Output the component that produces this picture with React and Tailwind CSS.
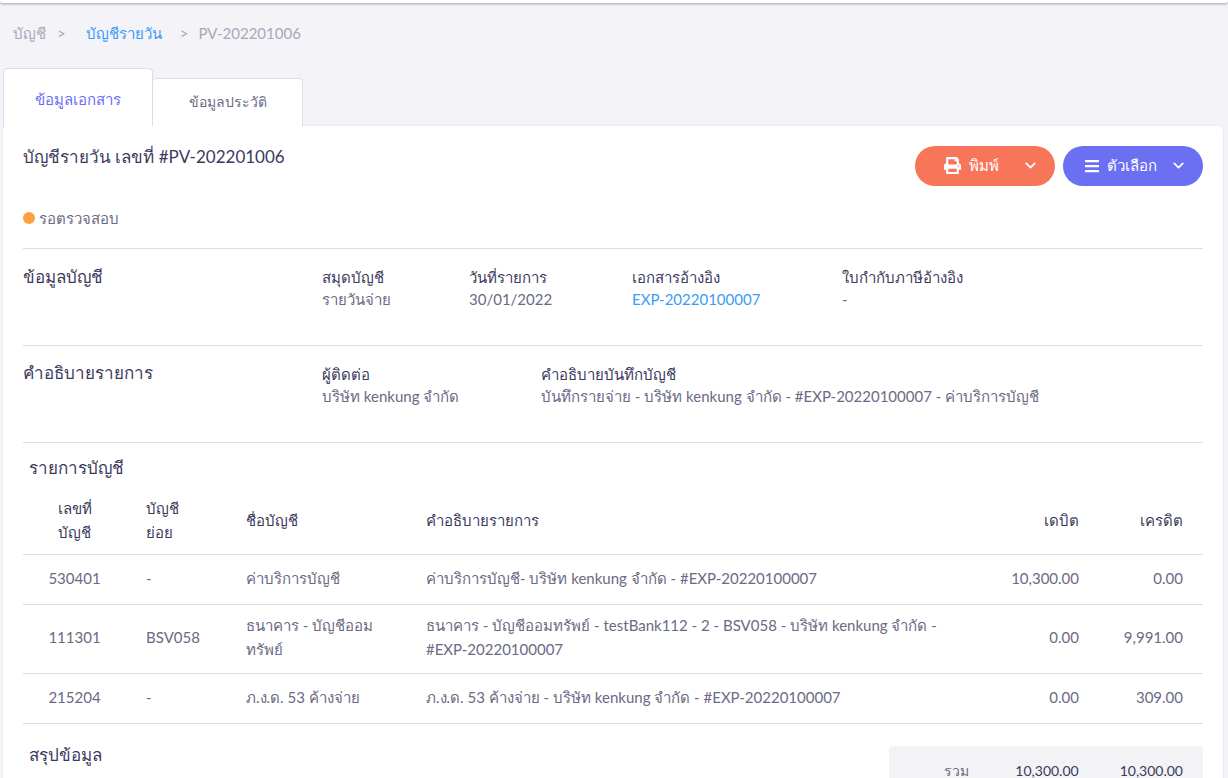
import { ChevronDown } from "lucide-react";
import { FaPrint, FaBars } from "react-icons/fa";

const rows = [
  { no: "530401", sub: "-", name: ["ค่าบริการบัญชี"], desc: ["ค่าบริการบัญชี- บริษัท kenkung จำกัด - #EXP-20220100007"], dr: "10,300.00", cr: "0.00", h: "h-[50px]" },
  { no: "111301", sub: "BSV058", name: ["ธนาคาร - บัญชีออม", "ทรัพย์"], desc: ["ธนาคาร - บัญชีออมทรัพย์ - testBank112 - 2 - BSV058 - บริษัท kenkung จำกัด -", "#EXP-20220100007"], dr: "0.00", cr: "9,991.00", h: "h-[69px]" },
  { no: "215204", sub: "-", name: ["ภ.ง.ด. 53 ค้างจ่าย"], desc: ["ภ.ง.ด. 53 ค้างจ่าย - บริษัท kenkung จำกัด - #EXP-20220100007"], dr: "0.00", cr: "309.00", h: "h-[50px]" },
];

function Field({ label, value, link, w }) {
  return (
    <div className={w}>
      <div className="text-[15px] leading-[22px] text-[#3b3a5c]">{label}</div>
      <div className={`text-[15px] leading-[22px] ${link ? "text-[#3b9cf5]" : "text-[#6b6a85]"}`}>{value}</div>
    </div>
  );
}

export default function App() {
  return (
    <div className="h-[778px] w-[1228px] overflow-hidden bg-[#f3f3f8] font-['Lato','Noto_Sans',sans-serif] text-[15px] text-[#6b6a85]">
      <div className="h-[3px] rounded-b-md bg-white shadow-[0_1px_3px_rgba(0,0,0,0.35)]" />

      <div className="flex h-[60px] items-center pb-[1px] pl-[13px] text-[15px] leading-[20px] text-[#a9a9b8]">
        <span>บัญชี</span>
        <span className="ml-[11px]">&gt;</span>
        <span className="ml-[20px] text-[#3b9cf5]">บัญชีรายวัน</span>
        <span className="ml-[18px]">&gt;</span>
        <span className="ml-[10px]">PV-202201006</span>
      </div>

      <div className="flex h-[63px] items-end pl-[3px] pt-[5px]">
        <div className="flex h-[58px] w-[150px] items-start justify-center rounded-t border border-b-0 border-[#dcdcea] bg-white pt-[19px] text-[15px] leading-[22px] text-[#6c6cf3]">
          ข้อมูลเอกสาร
        </div>
        <div className="flex h-[48px] w-[150px] items-start justify-center rounded-t border border-b-0 border-l-0 border-[#dcdcea] bg-white pt-[12px] text-[14px] leading-[22px] text-[#6b6a85]">
          ข้อมูลประวัติ
        </div>
      </div>

      <div className="ml-[3px] mr-[5px] h-[660px] rounded-t bg-white px-[20px] shadow-[0_0_3px_rgba(0,0,0,0.08)]">
        <div className="flex items-start justify-between pt-[20px]">
          <div className="text-[17px] leading-[22px] text-[#3b3a5c]">บัญชีรายวัน เลขที่ #PV-202201006</div>
          <div className="flex gap-[8px]">
            <button className="flex h-[40px] w-[140px] items-center rounded-full bg-[#f7765a] pb-[1px] pl-[29px] text-[15px] text-white">
              <FaPrint size={17} />
              <span className="ml-[8px]">พิมพ์</span>
              <ChevronDown size={17} strokeWidth={2.5} className="ml-[23px]" />
            </button>
            <button className="flex h-[40px] w-[140px] items-center rounded-full bg-[#6b6ff2] pb-[1px] pl-[21px] text-[15px] text-white">
              <FaBars size={16} />
              <span className="ml-[7px]">ตัวเลือก</span>
              <ChevronDown size={17} strokeWidth={2.5} className="ml-[13px]" />
            </button>
          </div>
        </div>

        <div className="mt-[21px] flex h-[22px] items-center">
          <span className="h-[12px] w-[12px] rounded-full bg-[#ff9f3f]" />
          <span className="ml-[4px] text-[15px]">รอตรวจสอบ</span>
        </div>

        <div className="mt-[19px] flex h-[97px] border-t border-[#dddde6] pt-[17px]">
          <div className="w-[299px] text-[17px] leading-[22px] text-[#3b3a5c]">ข้อมูลบัญชี</div>
          <Field w="w-[147px]" label="สมุดบัญชี" value="รายวันจ่าย" />
          <Field w="w-[163px]" label="วันที่รายการ" value="30/01/2022" />
          <Field w="w-[210px]" label="เอกสารอ้างอิง" value="EXP-20220100007" link />
          <Field w="w-[200px]" label="ใบกำกับภาษีอ้างอิง" value="-" />
        </div>

        <div className="flex h-[97px] border-t border-[#dddde6] pt-[16px]">
          <div className="w-[299px] text-[17px] leading-[22px] text-[#3b3a5c]">คำอธิบายรายการ</div>
          <div className="flex pt-[1px]">
            <Field w="w-[219px]" label="ผู้ติดต่อ" value="บริษัท kenkung จำกัด" />
            <Field label="คำอธิบายบันทึกบัญชี" value="บันทึกรายจ่าย - บริษัท kenkung จำกัด - #EXP-20220100007 - ค่าบริการบัญชี" />
          </div>
        </div>

        <div className="border-t border-[#dddde6] pl-[6px] pt-[14px] text-[17px] leading-[22px] text-[#3b3a5c]">รายการบัญชี</div>

        <div className="mt-[5px] flex h-[71px] items-center border-b border-[#dddde6] pt-[2px] text-[15px] leading-[24px] text-[#3b3a5c]">
          <div className="w-[103px] text-center">เลขที่<br />บัญชี</div>
          <div className="w-[120px] pl-[20px]">บัญชี<br />ย่อย</div>
          <div className="w-[180px]">ชื่อบัญชี</div>
          <div className="flex-1">คำอธิบายรายการ</div>
          <div className="w-[100px] pr-[20px] text-right">เดบิต</div>
          <div className="w-[104px] pr-[20px] text-right">เครดิต</div>
        </div>

        {rows.map((r) => (
          <div key={r.no} className={`flex items-center border-b border-[#dddde6] pb-[4px] text-[15px] leading-[24px] ${r.h}`}>
            <div className="w-[103px] text-center">{r.no}</div>
            <div className="w-[120px] pl-[20px]">{r.sub}</div>
            <div className="w-[180px]">{r.name.map((l) => <div key={l}>{l}</div>)}</div>
            <div className="flex-1 whitespace-nowrap">{r.desc.map((l) => <div key={l}>{l}</div>)}</div>
            <div className="w-[100px] pr-[20px] text-right">{r.dr}</div>
            <div className="w-[104px] pr-[20px] text-right">{r.cr}</div>
          </div>
        ))}

        <div className="flex items-start justify-between pt-[22px]">
          <div className="pl-[6px] text-[17px] leading-[18px] text-[#3b3a5c]">สรุปข้อมูล</div>
          <div className="h-[80px] w-[314px] rounded bg-[#f3f3f6] pt-[15px] text-[14px] leading-[20px] text-[#3b3a5c]">
            <div className="flex justify-end pr-[20px]">
              <span className="mr-[46px] text-[#6b6a85]">รวม</span>
              <span className="mr-[41px]">10,300.00</span>
              <span>10,300.00</span>
            </div>
          </div>
        </div>
      </div>
    </div>
  );
}
